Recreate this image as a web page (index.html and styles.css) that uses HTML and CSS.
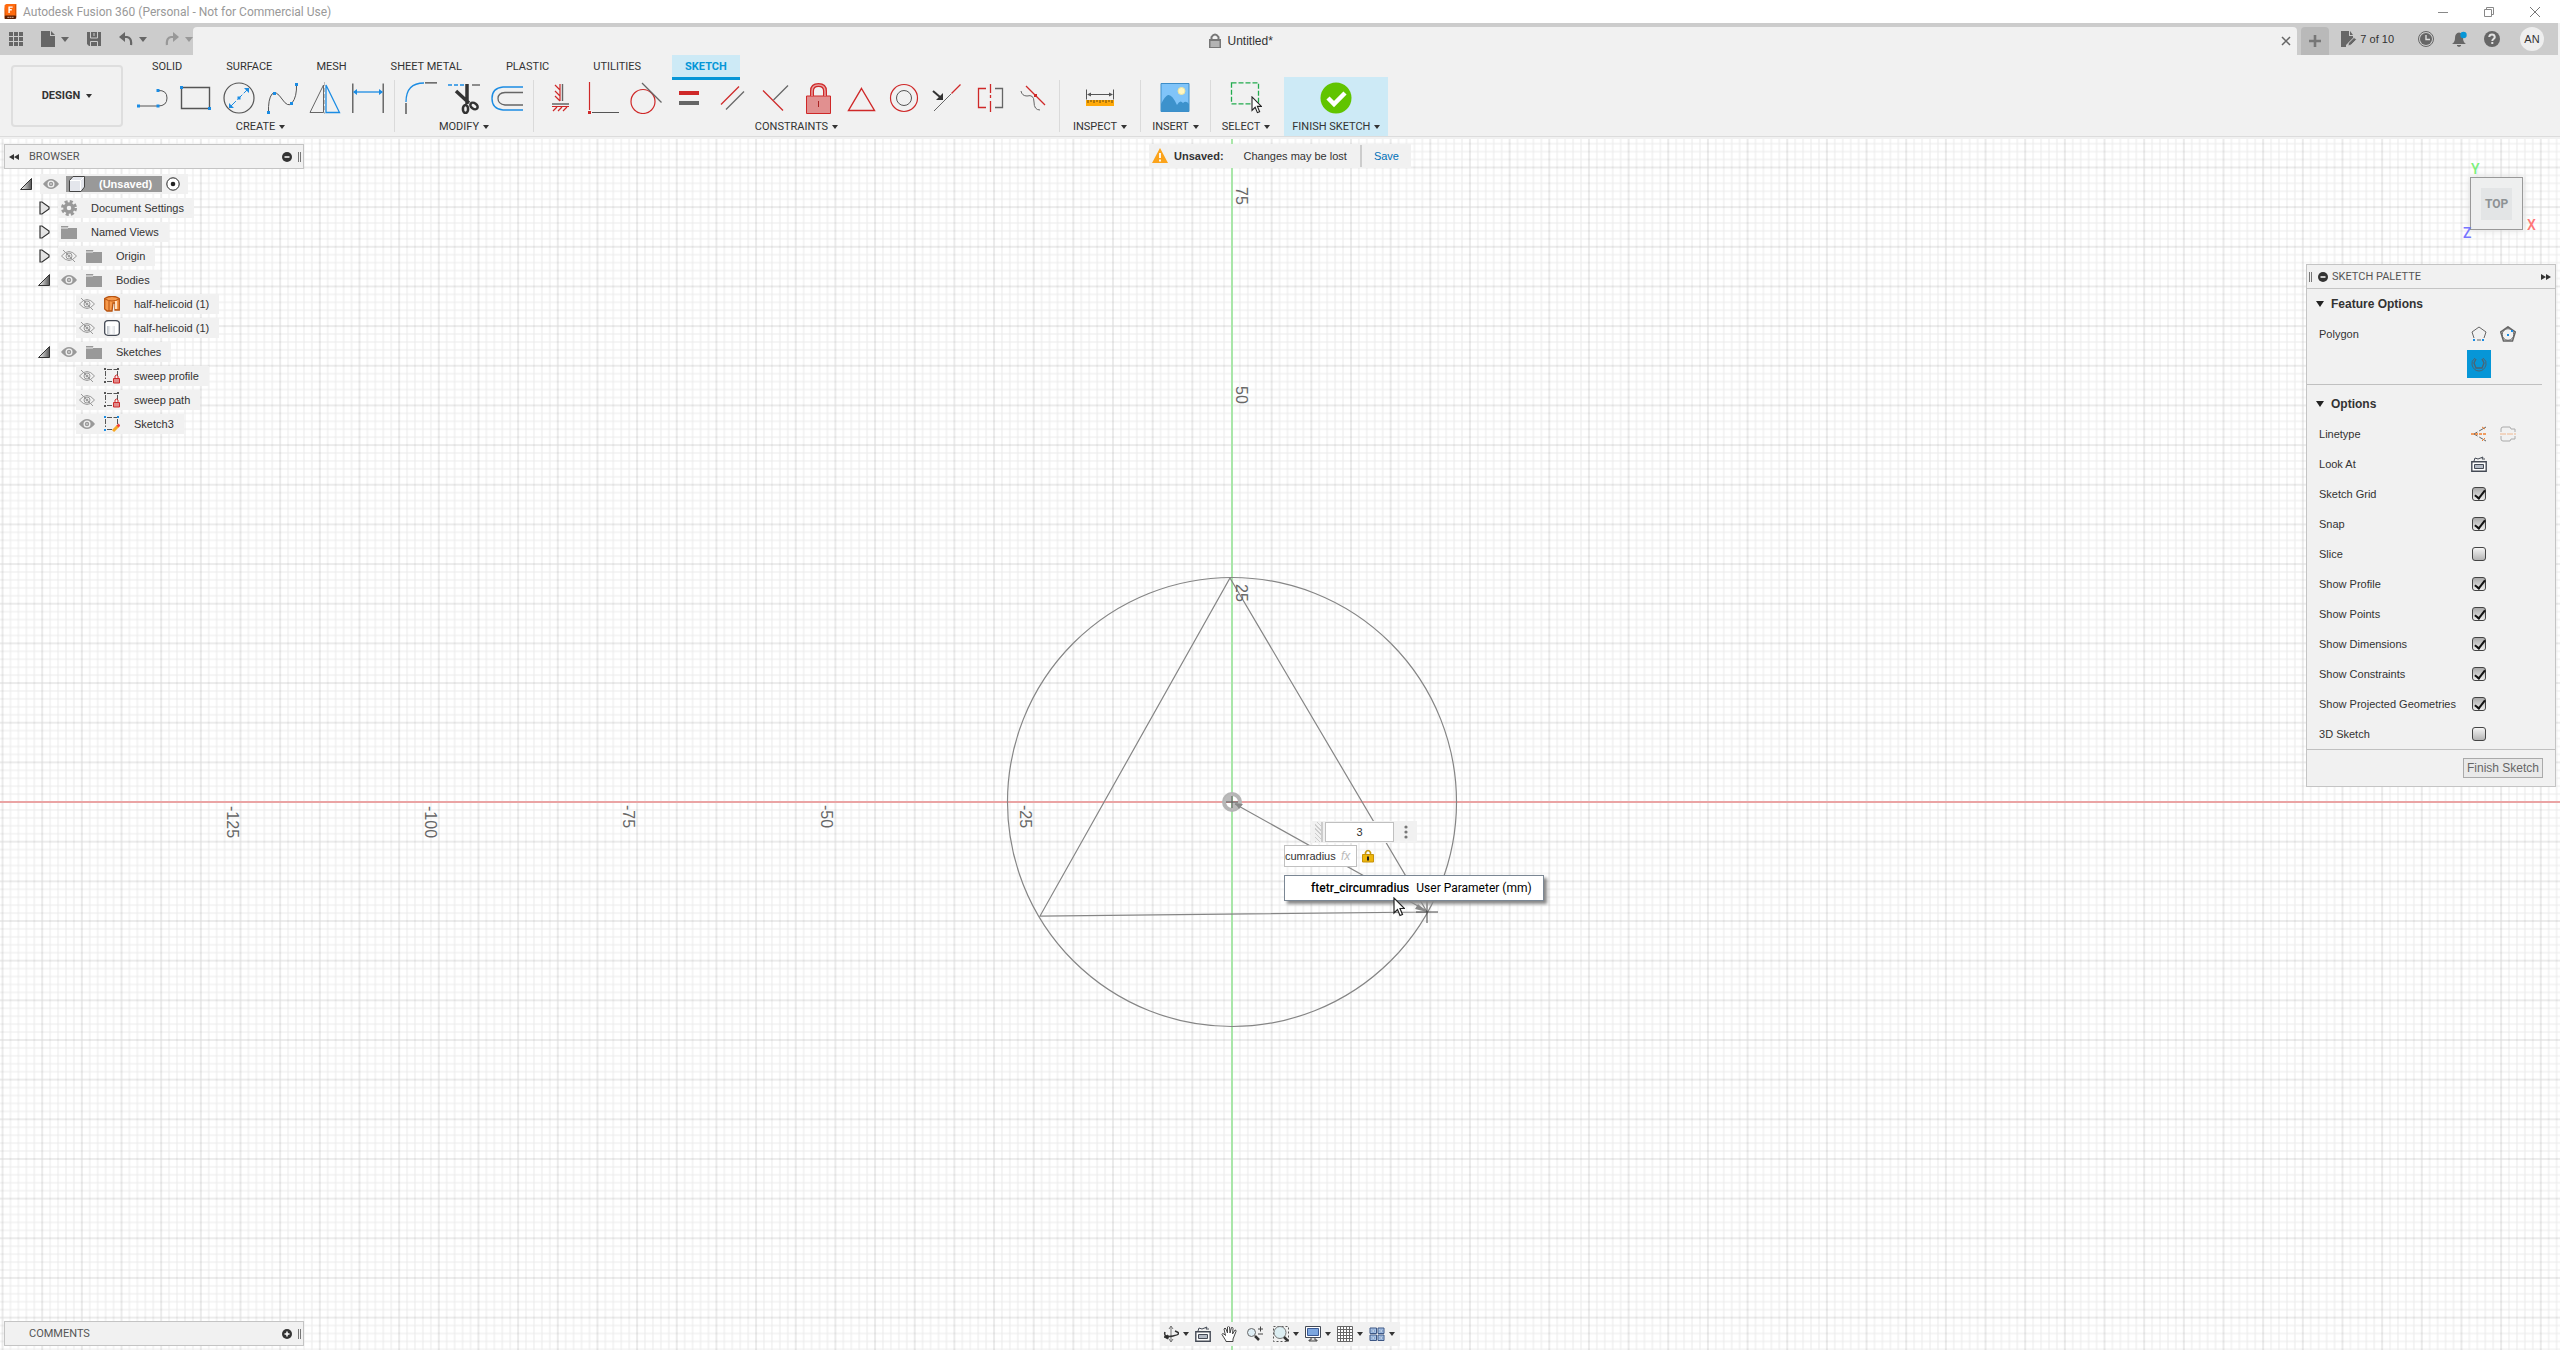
FILE: index.html
```html
<!DOCTYPE html>
<html lang="en">
<head>
<meta charset="utf-8">
<title>Autodesk Fusion 360 (Personal - Not for Commercial Use)</title>
<link rel="stylesheet" href="styles.css">
</head>
<body>
<svg class="defs" aria-hidden="true">
  <symbol id="eye" viewBox="0 0 16 16"><path d="M0 8Q8-2 16 8Q8 18 0 8Z" fill="#999"/><circle cx="8" cy="8" r="3.500" fill="#f1f1f1"/><circle cx="8" cy="8" r="2.200" fill="#999"/><circle cx="8" cy="8" r=".8" fill="#eee"/></symbol>
  <symbol id="eye-off" viewBox="0 0 16 16" fill="none" stroke="#999"><path d="M.5 8Q8-1 15.500 8Q8 17 .5 8Z"/><circle cx="8" cy="8" r="3"/><circle cx="8" cy="8" r="1" fill="#999"/><path d="M2 2L14 14"/></symbol>
  <symbol id="folder" viewBox="0 0 16 16"><path d="M0 2h7l1 2h8v11H0Z" fill="#999"/><path d="M0 4h7l1-1" stroke="#f1f1f1" fill="none"/></symbol>
  <symbol id="tri" viewBox="0 0 12 14"><path d="M2 1h2l7 5v2l-7 5H2Z" fill="#e4e4e4" stroke="#333" stroke-width="1.200"/></symbol>
  <symbol id="tri-open" viewBox="0 0 12 14"><path d="M11.500 1.500V12.500H.5Z" fill="url(#fold)" stroke="#333"/></symbol>
  <symbol id="sk" viewBox="0 0 16 16"><g stroke="#555" fill="none"><path d="M3 1.500h10M1.500 3v8M13.500 3v5M3 13.500h5" stroke-dasharray="5 1.500"/></g><path d="M0 0h2v2H0ZM13 0h2v2h-2ZM0 13h2v2H0Z" fill="#555"/></symbol>
  <symbol id="sk-lock" viewBox="0 0 16 16"><use href="#sk"/><path d="M9.500 10.500h6v4.500h-6Z" fill="#e08a8a" stroke="#cf2828"/><path d="M11 10V8q1.500-2 3 0v2" fill="none" stroke="#cf2828"/></symbol>
  <linearGradient id="fold"><stop stop-color="#fff"/><stop offset="1" stop-color="#555"/></linearGradient>
  <linearGradient id="silver"><stop stop-color="#bbc1c8"/><stop offset=".5" stop-color="#fff"/><stop offset="1" stop-color="#dde0e4"/></linearGradient>
  <symbol id="cursor" viewBox="0 0 12 20"><path d="M1 1V16L4.500 12.500L7 18.500L9.500 17.500L7 11.500H11.500Z" fill="#fff" stroke="#222" stroke-width="1.200"/></symbol>
  <symbol id="home" viewBox="0 0 16 16"><path d="M.8 5.800h14.400v9.400H.8Z" fill="#fff" stroke="#444a55" stroke-width="1.400"/><path d="M3.500 8.500h9v4h-9Z" fill="#b4bac4" stroke="#444a55"/><path d="M3 5l1-3 3 1 5-2-1 2h3" fill="none" stroke="#444a55"/></symbol>
</svg>

<header class="titlebar">
  <svg class="i14" viewBox="0 0 14 18"><path d="M1 1l2-1h11v14l-1 2H1Z" fill="#ff6a0e"/><path d="M1 13h13v3l-1 1H1Z" fill="#5a1d00"/><path d="M1 1l1 12H1ZM13 1v12h1V0Z" fill="#c24800"/><path d="M6 10V3.500h4M6 6.500h3" stroke="#fff" stroke-width="1.600" fill="none"/><path d="M4 15h7" stroke="#e8c6b5" stroke-dasharray="2 .5"/></svg>
  <h1>Autodesk Fusion 360 (Personal - Not for Commercial Use)</h1>
  <div class="window-buttons">
    <button aria-label="Minimize"><svg class="i10" viewBox="0 0 10 10"><path d="M0 5.500h10" stroke="#888"/></svg></button>
    <button aria-label="Restore"><svg class="i10" viewBox="0 0 10 10" fill="none" stroke="#888"><path d="M.5 2.500h7v7h-7ZM2.500 2V.5h7v7H8"/></svg></button>
    <button aria-label="Close"><svg class="i10" viewBox="0 0 10 10"><path d="M0 0L10 10M10 0L0 10" stroke="#777"/></svg></button>
  </div>
</header>

<div class="appbar">
  <div class="quick">
    <button aria-label="Data panel"><svg class="i14" viewBox="0 0 14 14" fill="#666"><path d="M0 0h4v4H0ZM5 0h4v4H5ZM10 0h4v4h-4ZM0 5h4v4H0ZM5 5h4v4H5ZM10 5h4v4h-4ZM0 10h4v4H0ZM5 10h4v4H5ZM10 10h4v4h-4Z"/></svg></button>
    <button aria-label="File" class="has-arrow"><svg class="i14" viewBox="0 0 14 16" fill="#666"><path d="M0 0h9v5h5v11H0ZM10 0l4 4h-4Z"/></svg><i class="arrow grey"></i></button>
    <button aria-label="Save"><svg class="i14" viewBox="0 0 14 14"><path d="M0 0h14v14H2l-2-2Z" fill="#666"/><path d="M3.500 0v6h7V0M3.500 14V9.500h7V14" stroke="#ccc" fill="none"/><path d="M7 1v3" stroke="#ccc"/></svg></button>
    <button aria-label="Undo" class="has-arrow"><svg class="i14" viewBox="0 0 14 14"><path d="M1 5h7q5 1 4 8" stroke="#666" stroke-width="2.200" fill="none"/><path d="M0 5L6 0V10Z" fill="#666"/></svg><i class="arrow grey"></i></button>
    <button aria-label="Redo" class="has-arrow faded"><svg class="i14" viewBox="0 0 14 14"><path d="M13 5H6q-5 1-4 8" stroke="#666" stroke-width="2.200" fill="none"/><path d="M14 5L8 0V10Z" fill="#666"/></svg><i class="arrow grey"></i></button>
  </div>
  <div class="doc-tab">
    <span class="doc-name"><svg class="i14" viewBox="0 0 14 16"><path d="M3.500 7V4q3.500-5 7 0v3" fill="none" stroke="#777" stroke-width="2"/><path d="M1 6h12v9H1Z" fill="#777"/><path d="M2.500 9h9M2.500 11h9M2.500 13h9" stroke="#f1f1f1"/></svg>Untitled*</span>
    <button aria-label="Close document"><svg class="i10" viewBox="0 0 10 10"><path d="M1 1L9 9M9 1L1 9" stroke="#666" stroke-width="1.500"/></svg></button>
  </div>
  <button class="plus" aria-label="New document"><svg class="i14" viewBox="0 0 14 14"><path d="M7 1V13M1 7H13" stroke="#777" stroke-width="2.600"/></svg></button>
  <button class="jobs"><svg class="i16" viewBox="0 0 16 16"><path d="M0 0h8v5h4v2L5 14v2H0ZM9 0l3 4H9Z" fill="#666"/><path d="M7 15l.5-3L13 6.500l2.500 2L10 14Z" fill="#666" stroke="#ccc" stroke-width=".8"/></svg>7 of 10</button>
  <div class="status">
    <button aria-label="Job status"><svg class="i16" viewBox="0 0 16 16"><circle cx="8" cy="8" r="7.500" fill="none" stroke="#666"/><circle cx="8" cy="8" r="6" fill="#666"/><path d="M8 4v4.500h4" stroke="#ddd" fill="none" stroke-width="1.400"/></svg></button>
    <button aria-label="Notifications"><svg class="i16" viewBox="0 0 16 16"><path d="M1 13q3-2 3-6Q4 2 8 1.500Q12 2 12 7q0 4 3 6Z" fill="#666"/><path d="M6 14h4v1l-2 1-2-1Z" fill="#666"/><circle cx="12.500" cy="4" r="3.200" fill="#0696d7"/></svg></button>
    <button aria-label="Help"><svg class="i16" viewBox="0 0 16 16"><circle cx="8" cy="8" r="8" fill="#666"/><path d="M5.200 6Q5.500 3.500 8 3.500T10.800 6Q10.800 7 9.500 8T8.300 10" stroke="#e2e2e2" stroke-width="2" fill="none"/><path d="M7.300 11h2v2h-2Z" fill="#e2e2e2"/></svg></button>
    <button class="avatar">AN</button>
  </div>
</div>

<div class="ribbon">
  <button class="design">DESIGN <i class="arrow"></i></button>
  <div class="ribbon-main">
    <nav class="tabs">
      <a href="#">SOLID</a><a href="#">SURFACE</a><a href="#">MESH</a><a href="#">SHEET METAL</a><a href="#">PLASTIC</a><a href="#">UTILITIES</a><a href="#" class="active">SKETCH</a>
    </nav>
    <div class="groups">
      <section class="group">
        <div class="tools">
          <button aria-label="Line"><svg viewBox="0 0 32 32"><path d="M2 24H21Q30 24 30 16T21 8.500" fill="none" stroke="#555"/><path d="M0 22.500h3v3H0ZM19.500 22.500h3v3h-3ZM19.500 7h3v3h-3Z" fill="#1b8ce3"/></svg></button>
          <button aria-label="Rectangle"><svg viewBox="0 0 32 32"><path d="M1.500 5.500h28v21h-28Z" fill="none" stroke="#555" stroke-width="1.400"/><path d="M0 4h3v3H0ZM28 25h3v3h-3Z" fill="#1b8ce3"/></svg></button>
          <button aria-label="Circle"><svg viewBox="0 0 32 32"><circle cx="16" cy="16" r="15" fill="none" stroke="#555" stroke-width="1.200"/><path d="M8 24L24 8" stroke="#1b8ce3" stroke-dasharray="7 2"/><path d="M6 26v-5l5 5ZM26 6v5l-5-5ZM14.500 14.500h3v3h-3Z" fill="#1b8ce3"/></svg></button>
          <button aria-label="Spline"><svg viewBox="0 0 32 32"><path d="M2.500 31Q2 17 6 12Q10 8 16 17T26 21Q31 15 30.500 2" fill="none" stroke="#555"/><path d="M1 29h3v3H1ZM7 10h3v3H7ZM24 20h3v3h-3ZM29 1h3v3h-3Z" fill="#1b8ce3"/></svg></button>
          <button aria-label="Mirror"><svg viewBox="0 0 32 32" fill="none"><path d="M14.500 3V30.500H1Z" stroke="#666"/><path d="M17 3V30.500H30.500Z" stroke="#1b8ce3" stroke-width="1.300"/><path d="M15.500 0V32" stroke="#bbb" stroke-dasharray="4 2"/></svg></button>
          <button aria-label="Dimension"><svg viewBox="0 0 32 32"><path d="M.8 1.500V31M31.200 1.500V31" stroke="#555" stroke-width="1.300"/><path d="M2 10H30" stroke="#1b8ce3" stroke-width="1.300"/><path d="M1 10l4-3v6ZM31 10l-4-3v6Z" fill="#1b8ce3"/></svg></button>
        </div>
        <button class="group-label">CREATE <i class="arrow"></i></button>
      </section>
      <section class="group">
        <div class="tools">
          <button aria-label="Fillet"><svg viewBox="0 0 32 32" fill="none"><path d="M1 20Q1 1 19 1" stroke="#1b8ce3" stroke-width="1.300"/><path d="M20 .8H32M1 21V32" stroke="#444" stroke-width="1.300"/></svg></button>
          <button aria-label="Trim"><svg viewBox="0 0 32 32"><path d="M0 3H17" stroke="#1b8ce3" stroke-width="1.300" stroke-dasharray="4 2"/><path d="M24 3h8" stroke="#555" stroke-width="1.300"/><path d="M8 9L21 21M19 2v20" stroke="#333" stroke-width="3.500"/><g fill="none" stroke="#333" stroke-width="2.500"><ellipse cx="17.500" cy="27" rx="2.600" ry="4"/><ellipse cx="26" cy="24" rx="4" ry="2.800" transform="rotate(35 26 24)"/></g></svg></button>
          <button aria-label="Offset"><svg viewBox="0 0 32 32" fill="none"><path d="M32 5H12Q1 6 1 16.500T12 28H32" stroke="#1b8ce3" stroke-width="1.400"/><path d="M32 10.500H14Q7 11 7 16.500T14 23H32" stroke="#666" stroke-width="1.300"/></svg></button>
        </div>
        <button class="group-label">MODIFY <i class="arrow"></i></button>
      </section>
      <section class="group">
        <div class="tools">
          <button aria-label="Horizontal/Vertical"><svg viewBox="0 0 32 32" fill="none"><path d="M16 2V19M11 3l5 5M11 9l5 5M11 14l5 5M8 24.500H25M13 25l-4 4M18 25l-4 4M23 25l-4 4" stroke="#cf2828" stroke-width="1.200"/><path d="M18.500 2V19M8 22H25" stroke="#666" stroke-width="1.400"/></svg></button>
          <button aria-label="Coincident"><svg viewBox="0 0 32 32" fill="none"><path d="M2.500 0V28" stroke="#cf2828" stroke-width="1.200"/><path d="M5 30.500H32" stroke="#555"/><path d="M1 29h3v3H1Z" fill="#cf2828"/></svg></button>
          <button aria-label="Tangent"><svg viewBox="0 0 32 32" fill="none"><circle cx="13" cy="19.500" r="12" stroke="#cf2828" stroke-width="1.200"/><path d="M12 1L31.500 20.500" stroke="#666" stroke-width="1.200"/></svg></button>
          <button aria-label="Equal"><svg viewBox="0 0 32 32"><path d="M6 9h20v4H6Z" fill="#cf2828"/><path d="M6 19h20v4H6Z" fill="#666"/></svg></button>
          <button aria-label="Parallel"><svg viewBox="0 0 32 32"><path d="M5 22.500L23 4.500" stroke="#cf2828" stroke-width="1.200"/><path d="M10 27.500L28 9.500" stroke="#666" stroke-width="1.200"/></svg></button>
          <button aria-label="Perpendicular"><svg viewBox="0 0 32 32"><path d="M4 8.500L24 28.500" stroke="#cf2828" stroke-width="1.200"/><path d="M14.500 18L29 3.500" stroke="#666" stroke-width="1.200"/></svg></button>
          <button aria-label="Fix"><svg viewBox="0 0 32 32"><path d="M4.500 14h24v17.500h-24Z" fill="#e19090" stroke="#cf2828"/><path d="M10 14V9Q10 3 16.500 3T23 9V14" fill="none" stroke="#cf2828" stroke-width="4"/><path d="M10 14V9Q10 3 16.500 3T23 9V14" fill="none" stroke="#e8a0a0" stroke-width="1.500"/><path d="M16.500 19v6" stroke="#a22"/></svg></button>
          <button aria-label="Midpoint"><svg viewBox="0 0 32 32"><path d="M16.500 6.500L29.500 28.500H3.500Z" fill="none" stroke="#cf2828" stroke-width="1.400"/></svg></button>
          <button aria-label="Concentric"><svg viewBox="0 0 32 32" fill="none"><circle cx="16" cy="16" r="13.500" stroke="#cf2828" stroke-width="1.200"/><circle cx="16" cy="16" r="7.500" stroke="#555"/></svg></button>
          <button aria-label="Collinear"><svg viewBox="0 0 32 32"><path d="M3 29L20 12" stroke="#666"/><path d="M20.500 11.500L29.500 2.500" stroke="#cf2828" stroke-width="1.300"/><path d="M2 9L9 15" stroke="#333" stroke-width="2"/><path d="M12 18V11L5 18Z" fill="#333"/></svg></button>
          <button aria-label="Symmetry"><svg viewBox="0 0 32 32" fill="none"><path d="M12 6.500H4.500v19H12M16.500 2V11M16.500 13v3M16.500 19V30" stroke="#cf2828" stroke-width="1.300"/><path d="M21 6.500h7.500v19H21" stroke="#666" stroke-width="1.300"/></svg></button>
          <button aria-label="Curvature"><svg viewBox="0 0 32 32" fill="none"><path d="M9 4L28 23" stroke="#cf2828" stroke-width="1.200"/><path d="M4 9Q5 14 10 14Q17 12 17 20T23 28" stroke="#666"/><path d="M17 12h3v3h-3Z" fill="#cf2828"/></svg></button>
        </div>
        <button class="group-label">CONSTRAINTS <i class="arrow"></i></button>
      </section>
      <section class="group single">
        <button class="tool" aria-label="Measure"><svg viewBox="0 0 32 32"><path d="M2.500 7.500v10M29.500 7.500v10M4 12.500h24" stroke="#555"/><path d="M3 12.500l4-2v4ZM29 12.500l-4-2v4Z" fill="#555"/><path d="M2 18h28v6H2Z" fill="#ffa908"/><path d="M4 18v3M7 18v2M10 18v3M13 18v2M16 18v3M19 18v2M22 18v3M25 18v2M28 18v3" stroke="#6b4a0a"/></svg></button>
        <button class="group-label">INSPECT <i class="arrow"></i></button>
      </section>
      <section class="group single">
        <button class="tool" aria-label="Insert image"><svg viewBox="0 0 32 32"><path d="M2 1.500h28v28H2Z" fill="#80c4f9" stroke="#3c8dc8"/><path d="M2 22Q6 14 9 13Q13 12 18 23Q21 17 24 21Q27 18 30 22V29.500H2Z" fill="#3d92cc"/><circle cx="22.500" cy="9" r="3.500" fill="#fff6c0" stroke="#efe5a0"/></svg></button>
        <button class="group-label">INSERT <i class="arrow"></i></button>
      </section>
      <section class="group single last">
        <button class="tool" aria-label="Select"><svg viewBox="0 0 32 32"><path d="M1.500 .8h27v21h-27Z" fill="none" stroke="#22ab4e" stroke-width="1.300" stroke-dasharray="5 2"/><use href="#cursor" x="21" y="14" width="11" height="18"/></svg></button>
        <button class="group-label">SELECT <i class="arrow"></i></button>
      </section>
      <section class="group finish">
        <button class="tool" aria-label="Finish"><svg viewBox="0 0 32 32"><circle cx="16" cy="16" r="15.500" fill="#61c400"/><path d="M8 16l6 6L25 11" fill="none" stroke="#fff" stroke-width="4.500"/></svg></button>
        <button class="group-label">FINISH SKETCH <i class="arrow"></i></button>
      </section>
    </div>
  </div>
</div>

<main class="canvas">
  <svg class="drawing" width="100%" height="100%">
    <defs>
      <pattern id="grid" width="39.66" height="39.66" patternUnits="userSpaceOnUse" x="-19.83" y="-19.83">
        <path d="M3.970 0V39.660M11.900 0V39.660M27.760 0V39.660M35.690 0V39.660M0 3.970H39.660M0 11.900H39.660M0 27.760H39.660M0 35.690H39.660" stroke="#000" stroke-opacity=".08"/>
        <path d="M19.830 0V39.660M0 19.830H39.660" stroke="#000" stroke-opacity=".15"/>
      </pattern>
    </defs>
    <svg x="48.125%" y="54.75%" overflow="visible">
      <rect x="-5000" y="-3000" width="10000" height="6000" fill="url(#grid)"/>
      <path d="M-5000 0H5000" stroke="#eaa4a4" stroke-width="2"/>
      <path d="M0 -3000V3000" stroke="#a9e6a9" stroke-width="2"/>
      <circle r="8" fill="none" stroke="#b5b5b5" stroke-width="4"/><path d="M0 0H-8A8 8 0 0 1 0 -8ZM0 0H8A8 8 0 0 1 0 8Z" fill="#bbb"/>
      <path d="M-6 0H6M0 -6V6" stroke="#555"/>
      <g fill="none" stroke="#858585" stroke-width="1.200"><circle r="224.500"/><path d="M-2 -224L195 110L-192 114Z"/><path d="M3 2L195 109"/></g>
      <path d="M3 1l8 1-4 5ZM195 110l-9-8-3 5Z" fill="#888"/>
      <path d="M184 110h22M195 99v22" stroke="#444"/>
      <g class="ticks">
        <text transform="translate(-1005 4) rotate(90)">-125</text><text transform="translate(-807 4) rotate(90)">-100</text><text transform="translate(-609 3) rotate(90)">-75</text><text transform="translate(-411 3) rotate(90)">-50</text><text transform="translate(-212 3) rotate(90)">-25</text>
        <text transform="translate(4 -218) rotate(90)">25</text><text transform="translate(4 -416) rotate(90)">50</text><text transform="translate(4 -615) rotate(90)">75</text>
      </g>
    </svg>
  </svg>

  <div class="left">
    <aside>
      <div class="panel-head"><svg class="i10" viewBox="0 0 10 10"><path d="M0 5l5-3v6ZM5 5l5-3v6Z" fill="#333"/></svg><h2>BROWSER</h2><button aria-label="Collapse"><svg class="i10" viewBox="0 0 10 10"><circle cx="5" cy="5" r="5" fill="#333"/><path d="M2.500 5h5" stroke="#fff" stroke-width="1.500"/></svg></button><i class="grip"></i></div>
      <ul class="tree">
        <li class="l0"><svg class="tw"><use href="#tri-open"/></svg><span class="node"><svg class="i16"><use href="#eye"/></svg><b class="root"><svg class="i16" viewBox="0 0 16 16"><path d="M.5 4.500L4 .5H15.500V11L12 15.500H.5Z" fill="#e4e6ec" stroke="#444"/><path d="M1 4.500H11.500V15M11.500 4.500L15 1" stroke="#fff" fill="none"/></svg><span>(Unsaved)</span></b><svg class="i14" viewBox="0 0 14 14"><circle cx="7" cy="7" r="6.200" fill="#fff" stroke="#222"/><circle cx="7" cy="7" r="2.300" fill="#222"/></svg></span></li>
        <li class="l1"><svg class="tw"><use href="#tri"/></svg><span class="node"><svg class="i16" viewBox="0 0 16 16"><circle cx="8" cy="8" r="6.500" fill="none" stroke="#999" stroke-width="3" stroke-dasharray="3 2.100"/><circle cx="8" cy="8" r="4" fill="none" stroke="#999" stroke-width="3.500"/></svg><span>Document Settings</span></span></li>
        <li class="l1"><svg class="tw"><use href="#tri"/></svg><span class="node"><svg class="i16"><use href="#folder"/></svg><span>Named Views</span></span></li>
        <li class="l1"><svg class="tw"><use href="#tri"/></svg><span class="node"><svg class="i16"><use href="#eye-off"/></svg><svg class="i16"><use href="#folder"/></svg><span>Origin</span></span></li>
        <li class="l1"><svg class="tw"><use href="#tri-open"/></svg><span class="node"><svg class="i16"><use href="#eye"/></svg><svg class="i16"><use href="#folder"/></svg><span>Bodies</span></span></li>
        <li class="l2"><span class="node"><svg class="i16"><use href="#eye-off"/></svg><svg class="i16" viewBox="0 0 16 16"><path d="M.7 2.500Q8-2 15.300 2.500V14H11V7H9l-1 8H3L.7 13Z" fill="#f79a4c" stroke="#b85410" stroke-width="1.300"/><path d="M1 3Q8 7 15 3M5 5v10" stroke="#b85410" fill="none"/><path d="M11 5h2v8h-2Z" fill="#ffe0c0"/></svg><span>half-helicoid (1)</span></span></li>
        <li class="l2"><span class="node"><svg class="i16"><use href="#eye-off"/></svg><svg class="i16" viewBox="0 0 16 16"><path d="M.7 3Q1 1 4 .7H12Q15 1 15.300 3V13Q15 15 12 15.300H4Q1 15 .7 13Z" fill="#fff" stroke="#444a55" stroke-width="1.300"/><path d="M3 6h8v8H3Z" fill="url(#silver)"/></svg><span>half-helicoid (1)</span></span></li>
        <li class="l1"><svg class="tw"><use href="#tri-open"/></svg><span class="node"><svg class="i16"><use href="#eye"/></svg><svg class="i16"><use href="#folder"/></svg><span>Sketches</span></span></li>
        <li class="l2"><span class="node"><svg class="i16"><use href="#eye-off"/></svg><svg class="i16"><use href="#sk-lock"/></svg><span>sweep profile</span></span></li>
        <li class="l2"><span class="node"><svg class="i16"><use href="#eye-off"/></svg><svg class="i16"><use href="#sk-lock"/></svg><span>sweep path</span></span></li>
        <li class="l2"><span class="node"><svg class="i16"><use href="#eye"/></svg><svg class="i16" viewBox="0 0 16 16"><use href="#sk"/><path d="M0 0h2v2H0ZM13 0h2v2h-2ZM0 13h2v2H0Z" fill="#1b8ce3"/><path d="M9 15l5-5" stroke="#f5a623" stroke-width="3"/><path d="M13.500 10.500l2-2" stroke="#f0403c" stroke-width="3"/></svg><span>Sketch3</span></span></li>
      </ul>
    </aside>
    <div class="panel-head comments"><h2>COMMENTS</h2><button aria-label="Add comment"><svg class="i10" viewBox="0 0 10 10"><circle cx="5" cy="5" r="5" fill="#333"/><path d="M2.500 5h5M5 2.500v5" stroke="#fff" stroke-width="1.500"/></svg></button><i class="grip"></i></div>
  </div>

  <div class="middle">
    <div class="notice"><svg class="i16" viewBox="0 0 16 16"><path d="M8 0L16 15H0Z" fill="#fba31b"/><path d="M8 5v5M8 11.500v2" stroke="#fff" stroke-width="1.800"/></svg><b>Unsaved:</b><span class="msg">Changes may be lost</span><a href="#">Save</a></div>
    <div class="navbar">
      <button aria-label="Orbit" class="has-arrow"><svg class="i16" viewBox="0 0 16 16" fill="none" stroke="#333"><path d="M8 0V16M6 3l2-3 2 3M6 13l2 3 2-3" stroke="#777"/><path d="M12 5q8 3-2 5T2 6M2 11h4" stroke-width="1.500"/><path d="M1 11l4-2v4Z" fill="#222"/></svg><i class="arrow"></i></button>
      <button aria-label="Look at"><svg class="i16"><use href="#home"/></svg></button>
      <button aria-label="Pan"><svg class="i16" viewBox="0 0 16 16"><path d="M5 15L1 8.500Q1 7 3 8L4.500 9.500L3 3Q4 1 5 3L6.500 7L6.500 1Q7.500-.5 8.500 1L9 7L10.500 1.500Q12 1 12 2.500L11.500 8L14 4Q15.500 4 15 5.500L12 13V15.500H5Z" fill="#fff" stroke="#444"/></svg></button>
      <button aria-label="Zoom"><svg class="i16" viewBox="0 0 16 16"><circle cx="4.500" cy="6.500" r="4" fill="#dfeef5" stroke="#666"/><path d="M8 10l4 4" stroke="#333" stroke-width="2.500"/><path d="M11 3h5M13.500 .5v5M11 8h5" stroke="#444"/></svg></button>
      <button aria-label="Zoom window" class="has-arrow"><svg class="i16" viewBox="0 0 16 16"><path d="M.5 .5h15v15H.5Z" fill="none" stroke="#555" stroke-dasharray="2 2"/><circle cx="7" cy="6.500" r="6" fill="#dceef2" stroke="#777"/><path d="M11 11l4 4" stroke="#333" stroke-width="2.500"/></svg><i class="arrow"></i></button>
      <button aria-label="Display settings" class="has-arrow"><svg class="i16" viewBox="0 0 16 16"><path d="M.5 .5h15v11H.5Z" fill="#fff" stroke="#444a55"/><path d="M2.500 2.500h11v7h-11Z" fill="#7ca6df" stroke="#3a5a96"/><path d="M6 12v2H4v1h8v-1h-2v-2" fill="#ddd" stroke="#444"/></svg><i class="arrow"></i></button>
      <button aria-label="Grid and snaps" class="has-arrow"><svg class="i16" viewBox="0 0 16 16"><path d="M.5 .5h15v15H.5ZM3.500 0v16M6.500 0v16M9.500 0v16M12.500 0v16M0 3.500h16M0 6.500h16M0 9.500h16M0 12.500h16" fill="#fff" stroke="#666"/></svg><i class="arrow"></i></button>
      <button aria-label="Viewports" class="has-arrow"><svg class="i16" viewBox="0 0 16 16"><path d="M1 2h6.500v5.500H1ZM9 2h6v5.500H9ZM1 9h6.500v5.500H1ZM9 9h6v5.500H9Z" fill="#a9c5e8" stroke="#3c5684"/><path d="M3 4h2.500v2H3ZM11 4h2.500v2H11ZM3 11h2.500v2H3ZM11 11h2.500v2H11Z" fill="#dfeaf7" stroke="#6c8ab8" stroke-width=".6"/></svg><i class="arrow"></i></button>
    </div>
  </div>

  <div class="right">
    <div class="viewcube"><span class="face">TOP</span><span class="axis y">Y</span><span class="axis x">X</span><span class="axis z">Z</span></div>
    <aside class="palette">
      <div class="palette-head"><i class="grip"></i><button aria-label="Collapse palette"><svg class="i10" viewBox="0 0 10 10"><circle cx="5" cy="5" r="5" fill="#333"/><path d="M2.500 5h5" stroke="#fff" stroke-width="1.500"/></svg></button><h2>SKETCH PALETTE</h2><svg class="i10" viewBox="0 0 10 10"><path d="M0 2l5 3-5 3ZM5 2l5 3-5 3Z" fill="#333"/></svg></div>
      <section class="feature">
        <h3>Feature Options</h3>
        <div class="prow"><span>Polygon</span><button aria-label="Edge polygon"><svg class="i16" viewBox="0 0 16 16"><path d="M3 12L1 6L8 1L15 6L13 12M6 14h4" fill="none" stroke="#666"/><path d="M2 13h2v2H2ZM11 13h2v2h-2Z" fill="#1b8ce3"/></svg></button><button aria-label="Inscribed polygon"><svg class="i16" viewBox="0 0 16 16"><path d="M8 .8L15.300 6L12.500 15H3.500L.7 6Z" fill="none" stroke="#666" stroke-width="1.500"/><circle cx="8" cy="8.500" r="5.800" fill="none" stroke="#666"/><path d="M7 8h2v2H7ZM11 4h2v2h-2Z" fill="#1b8ce3"/></svg></button></div>
        <div class="prow"><span></span><button class="on" aria-label="Circumscribed polygon"><svg class="i16" viewBox="0 0 16 16"><path d="M4 2Q0 5 1 9Q3 15 8 15T15 9Q16 5 12 2" fill="none" stroke="#4d6372"/><path d="M5 3L3 7l2 5h6l2-5-2-4" fill="none" stroke="#4d6372" stroke-width="1.300"/></svg></button><i></i></div>
      </section>
      <section>
        <h3>Options</h3>
        <div class="prow"><span>Linetype</span><button aria-label="Construction"><svg class="i16" viewBox="0 0 16 16" fill="none"><path d="M15 1L3 8L15 15" stroke="#666" stroke-dasharray="8 2"/><path d="M0 8H16" stroke="#f08030" stroke-width="1.300" stroke-dasharray="3 1"/><path d="M11 1l3 2M11 15l3-3" stroke="#f08030"/></svg></button><button class="faded" aria-label="Centerline"><svg class="i16" viewBox="0 0 16 16" fill="none"><path d="M1 6V3q0-2 2-2h7l1 2h4v3M1 10v3q0 2 2 2h7l1-2h4v-3" stroke="#666"/><path d="M0 8h16" stroke="#f08030" stroke-dasharray="6 1"/></svg></button></div>
        <div class="prow"><span>Look At</span><button aria-label="Look at sketch"><svg class="i16"><use href="#home"/></svg></button><i></i></div>
        <label class="prow"><span>Sketch Grid</span><input type="checkbox" checked><i></i></label>
        <label class="prow"><span>Snap</span><input type="checkbox" checked><i></i></label>
        <label class="prow"><span>Slice</span><input type="checkbox"><i></i></label>
        <label class="prow"><span>Show Profile</span><input type="checkbox" checked><i></i></label>
        <label class="prow"><span>Show Points</span><input type="checkbox" checked><i></i></label>
        <label class="prow"><span>Show Dimensions</span><input type="checkbox" checked><i></i></label>
        <label class="prow"><span>Show Constraints</span><input type="checkbox" checked><i></i></label>
        <label class="prow"><span>Show Projected Geometries</span><input type="checkbox" checked><i></i></label>
        <label class="prow"><span>3D Sketch</span><input type="checkbox"><i></i></label>
      </section>
      <footer><button>Finish Sketch</button></footer>
    </aside>
  </div>

  <div class="origin">
    <div class="sides"><i class="dots"></i><input aria-label="Sides" value="3"><button aria-label="More options"><svg class="i14" viewBox="0 0 14 14" fill="#777"><circle cx="7" cy="2" r="1.600"/><circle cx="7" cy="7" r="1.600"/><circle cx="7" cy="12" r="1.600"/></svg></button></div>
    <div class="radius"><span class="field"><input aria-label="Circumradius" value="cumradius"><em>fx</em></span><svg class="i14" viewBox="0 0 14 14"><path d="M4.500 6V3.500Q7-.5 9.500 3.500V6" fill="none" stroke="#c79a10" stroke-width="1.600"/><path d="M1.500 5.500h11V13h-11Z" fill="#edb60c" stroke="#c79208"/><path d="M7 7.500v4" stroke="#222" stroke-width="2"/></svg></div>
    <div class="suggest"><b>ftetr_circumradius</b>User Parameter (mm)</div>
    <svg class="pointer"><use href="#cursor"/></svg>
  </div>
</main>
</body>
</html>
```
FILE: styles.css
```css
* { box-sizing: border-box; }
body {
  margin: 0;
  min-height: 100vh;
  display: flex;
  flex-direction: column;
  background: #f1f1f1;
  color: #333;
  font: 11px/16px "Liberation Sans", Arial, sans-serif;
}
button {
  border: 0;
  padding: 0;
  background: none;
  font: inherit;
  color: inherit;
  display: flex;
  align-items: center;
  justify-content: center;
}
svg { display: block; flex: none; }
h1, h2, h3, ul { margin: 0; padding: 0; }
a { color: inherit; text-decoration: none; }
.defs { position: absolute; width: 0; height: 0; }
.i10 { width: 10px; height: 10px; }
.i14 { width: 14px; height: 16px; }
.i16 { width: 16px; height: 16px; }
.arrow {
  width: 0;
  height: 0;
  border: solid transparent;
  border-width: 4px 3px 0;
  border-top-color: #333;
}
.arrow.grey { border-width: 5px 4px 0; border-top-color: #666; }
.faded { opacity: .5; }

/* window title */
.titlebar {
  display: flex;
  align-items: center;
  gap: 6px;
  height: 23px;
  padding: 0 20px 0 3px;
  background: #fff;
}
.titlebar h1 { flex: 1; font: 12px/16px Roboto, "Noto Sans", sans-serif; color: #999; }
.window-buttons { display: flex; gap: 36px; }

/* document bar */
.appbar {
  display: flex;
  align-items: flex-end;
  height: 32px;
  margin-right: 2px;
  background: #ccc;
}
.quick { display: flex; align-items: center; gap: 18px; width: 193px; height: 32px; padding-left: 9px; }
.has-arrow { gap: 6px; }
.doc-tab {
  flex: 1;
  display: flex;
  align-items: center;
  height: 28px;
  padding: 0 6px;
  border-radius: 4px 4px 0 0;
  background: #f1f1f1;
}
.doc-name { flex: 1; display: flex; justify-content: center; align-items: center; gap: 6px; font-size: 12px; }
.plus { width: 28px; height: 28px; margin-left: 4px; border-radius: 4px 4px 0 0; background: #b9b9b9; }
.jobs { height: 32px; margin-left: 12px; gap: 3px; }
.status { display: flex; align-items: center; gap: 17px; height: 32px; margin: 0 14px 0 24px; }
.avatar { width: 24px; height: 24px; margin-left: 3px; border-radius: 50%; background: #eee; }

/* ribbon */
.ribbon {
  display: flex;
  height: 82px;
  border-bottom: 1px solid #dcdcdc;
  font-family: Roboto, "Liberation Sans", sans-serif;
}
.design {
  width: 112px;
  height: 62px;
  margin: 10px 14px 0 11px;
  gap: 6px;
  border: 2px solid #dedede;
  border-radius: 4px;
  font-weight: 700;
}
.tabs { display: flex; gap: 18px; height: 25px; padding-left: 2px; }
.tabs a { height: 25px; padding: 0 13px; line-height: 23px; }
.tabs .active { background: #cdeaf6; border-bottom: 3px solid #0696d7; color: #0696d7; font-weight: 700; }
.groups { display: flex; height: 56px; }
.group { display: flex; flex-direction: column; padding: 2px 10px 0; }
.group > * { flex: none; }
.group:first-child { padding-left: 0; }
.group:nth-child(-n+5) { border-right: 1px solid #dadada; margin-bottom: 4px; }
.group.single { padding: 2px 13px 0; align-items: center; }
.group.single + .single { padding: 2px 11px 0; }
.group.single + .last { padding-right: 14px; }
.tools { display: flex; gap: 11px; }
.tools svg, .tool svg { width: 32px; height: 32px; }
.group-label { gap: 4px; height: 26px; }
.group.finish { align-items: center; margin-top: -3px; padding: 5px 8px 0; background: #cdeaf6; }

/* sketch canvas */
.canvas {
  position: relative;
  flex: 1;
  display: flex;
  justify-content: space-between;
  margin-top: 2px;
  padding: 5px 4px 4px;
  background: #fff;
}
.drawing { position: absolute; inset: 0; }
.ticks { font: 16px "Liberation Sans", Arial, sans-serif; fill: #666; }
.left, .middle, .right { position: relative; display: flex; flex-direction: column; justify-content: space-between; }
.left, .right { flex: 1; }
.left { align-items: flex-start; }
.middle { align-items: center; }
.right { align-items: flex-end; justify-content: flex-start; }

.panel-head, .palette-head {
  display: flex;
  align-items: center;
  width: 300px;
  height: 25px;
  padding: 0 2px 0 4px;
  border: 1px solid #c4c4c4;
  background: #f1f1f1;
}
h2 { flex: 1; padding-left: 10px; font: 11px/16px Roboto, "Liberation Sans", sans-serif; color: #555; }
.comments h2 { padding-left: 20px; }
.grip { width: 3px; height: 10px; margin-left: 6px; border: solid #777; border-width: 0 1px; }

.tree { list-style: none; display: flex; flex-direction: column; gap: 4px; margin-top: 5px; }
.tree li { display: flex; align-items: center; height: 20px; }
.tw { width: 12px; height: 14px; margin-right: 8px; }
.node { display: flex; align-items: center; gap: 9px; height: 20px; padding: 0 10px 0 3px; background: #f1f1f1; }
.node > span { padding-left: 5px; }
.l0 { padding-left: 16px; }
.l0 .node { gap: 4px; padding: 0 8px 0 3px; }
.l1 { padding-left: 34px; }
.l2 { padding-left: 72px; }
.root { display: flex; align-items: center; gap: 14px; height: 16px; margin-left: 3px; padding: 0 10px 0 3px; background: #999; color: #fff; }

.notice { display: flex; align-items: center; height: 24px; padding: 0 12px 0 3px; background: #f1f1f1; }
.notice b { margin: 0 20px 0 6px; }
.notice a { padding-left: 12px; line-height: 22px; border-left: 2px solid #ccc; color: #0070b8; }
.msg { padding-right: 13px; }
.navbar { display: flex; align-items: center; gap: 10px; height: 24px; padding: 0 5px 0 3px; background: #f1f1f1; }
.navbar .has-arrow { gap: 4px; }
.navbar .has-arrow + * { margin-left: -4px; }

/* view cube */
.viewcube { position: relative; width: 53px; height: 53px; margin: 33px 33px 34px 0; padding: 10px; border: 1px solid #999; background: #eeefef; box-shadow: 0 0 8px #ddd; }
.face { display: block; height: 32px; line-height: 32px; text-align: center; background: #e3e5e6; color: #8d9294; font-family: Roboto, sans-serif; font-size: 12px; font-weight: 700; }
.axis { position: absolute; font: 500 14px/14px Roboto, sans-serif; }
.axis.y { left: 0; top: -16px; color: #7bf07b; }
.axis.x { left: 56px; top: 40px; color: #f77; }
.axis.z { left: -8px; top: 48px; color: #77f; }

/* sketch palette */
.palette { width: 250px; border: 1px solid #c4c4c4; background: #f1f1f1; }
.palette-head { width: auto; height: 24px; padding: 0 4px 0 2px; border-width: 0 0 1px; }
.palette-head .grip { margin: 0 6px 0 0; }
.palette-head h2 { padding-left: 4px; }
.palette section { margin-right: 13px; padding-left: 12px; }
.palette .feature { height: 96px; border-bottom: 1px solid #c0c0c0; }
h3 { display: flex; align-items: center; gap: 7px; height: 30px; margin-left: -3px; font-size: 12px; line-height: 16px; }
h3::before { content: ""; border: solid transparent; border-width: 6px 4px 0; border-top-color: #222; }
.feature + section h3 { height: 34px; padding-top: 4px; }
.prow { display: grid; grid-template-columns: 1fr 24px 24px; column-gap: 5px; align-items: center; justify-items: center; height: 30px; padding-right: 22px; }
.prow span { justify-self: start; white-space: nowrap; }
.prow .on { width: 24px; height: 28px; background: #0696d7; }
.prow input {
  appearance: none;
  width: 14px;
  height: 14px;
  margin: 0;
  border: 1px solid #444;
  border-radius: 3px;
  background: linear-gradient(#f4f4f4, #b4b4b4);
}
.prow input:checked { display: grid; background: linear-gradient(#aaa, #eee); }
.prow input:checked::after { content: ""; width: 4px; height: 9px; margin: 0 0 0 4px; border: solid #111; border-width: 0 2px 2px 0; transform: rotate(38deg); }
.palette footer { display: flex; justify-content: flex-end; height: 37px; padding: 8px 12px; border-top: 1px solid #c0c0c0; }
.palette footer button { height: 20px; padding: 0 3px; border: 1px solid #aaa; background: #e9e9e9; color: #666; font-size: 12px; }

/* floating input at the sketch origin */
.origin { position: absolute; left: 48.125%; top: 54.75%; }
.sides { position: absolute; left: 79px; top: 19px; display: flex; align-items: center; width: 106px; height: 22px; background: #f1f1f1; }
.dots { width: 8px; height: 20px; margin: 0 2px 0 4px; border-right: 2px solid #ccc; background: repeating-linear-gradient(45deg, #ccc 0 1px, #f1f1f1 1px 3px); }
.origin input { border: 1px solid #c0c0c0; background: #fff; color: #333; font: inherit; padding: 0; }
.sides input { width: 69px; height: 20px; text-align: center; }
.sides button { flex: 1; }
.radius { position: absolute; left: 52px; top: 43px; display: flex; align-items: center; gap: 4px; }
.field { display: flex; align-items: center; width: 73px; height: 22px; border: 1px solid #c0c0c0; background: #fff; }
.origin .field input { border: 0; width: 56px; height: 16px; }
.field em { color: #bbb; font-size: 12px; }
.suggest { position: absolute; left: 52px; top: 73px; display: flex; gap: 7px; width: 260px; height: 26px; padding-left: 26px; border: 1px solid #7b8794; background: #fff; color: #000; box-shadow: 3px 3px 3px #888; font: 12px/24px Roboto, "Noto Sans", sans-serif; white-space: nowrap; }
.suggest b { font-weight: 500; }
.pointer { position: absolute; left: 161px; top: 95px; width: 12px; height: 20px; }
```
